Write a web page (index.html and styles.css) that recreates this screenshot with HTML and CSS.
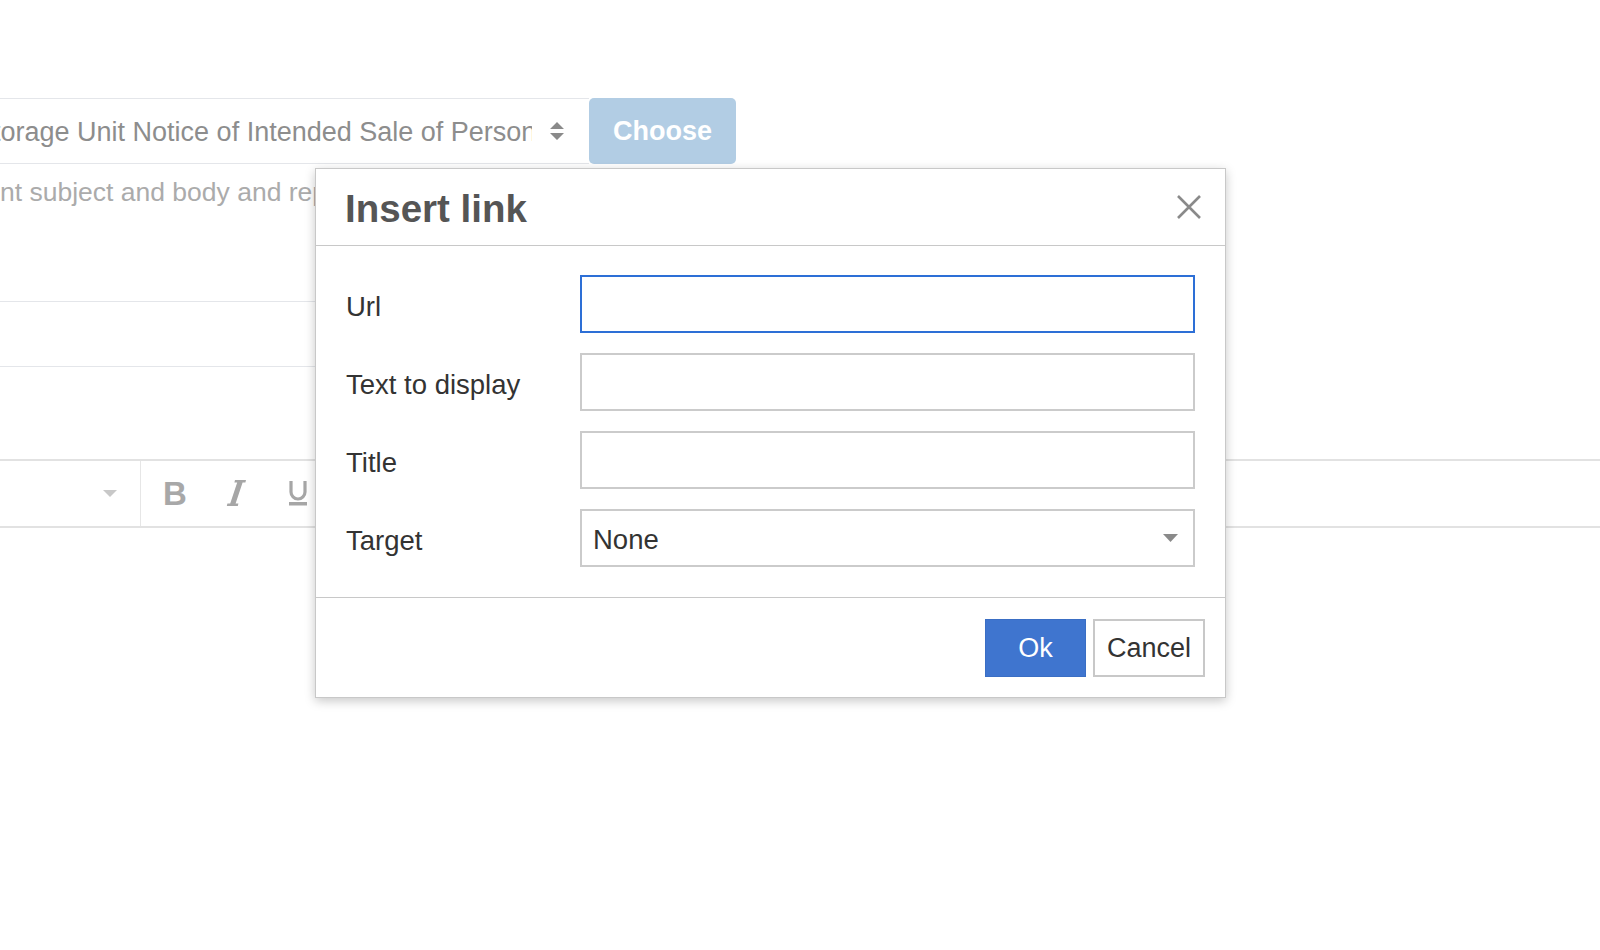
FILE: index.html
```html
<!DOCTYPE html>
<html>
<head>
<meta charset="utf-8">
<link rel="stylesheet" href="styles.css">
</head>
<body>
<div class="page">
  <div class="tpl-row">
    <div class="tpl-select">
      <span class="tpl-text">Storage Unit Notice of Intended Sale of Personal Property</span>
      <svg class="tpl-arrows" width="16" height="22" viewBox="0 0 16 22"><path d="M8 2 L15 9 H1 Z M8 20 L15 13 H1 Z" fill="#8a8a8a"/></svg>
    </div>
    <div class="choose">Choose</div>
  </div>
  <div class="hint">nt subject and body and replace the current content</div>
  <div class="field"></div>
  <div class="toolbar">
    <div class="tb-format">
      <svg width="14" height="8" viewBox="0 0 14 8"><path d="M0 0 H14 L7 7 Z" fill="#c8c8c8"/></svg>
    </div>
    <div class="tb-group">
      <span class="tb-b">B</span>
      <svg class="tb-i" width="24" height="28" viewBox="0 0 24 28"><path d="M12 1 H23 L22.4 3.5 H19.6 L12.6 24.5 H15.4 L14.8 27 H3.8 L4.4 24.5 H7.2 L14.2 3.5 H11.4 Z" fill="#a6a6a6"/></svg>
      <svg class="tb-u" width="20" height="28" viewBox="0 0 20 28"><path d="M3 2 V13 A7 7 0 0 0 17 13 V2" fill="none" stroke="#a6a6a6" stroke-width="3.2"/><rect x="1" y="23" width="18" height="3.5" fill="#a6a6a6"/></svg>
    </div>
  </div>
</div>

<div class="dialog">
  <div class="dlg-head">
    <div class="dlg-title">Insert link</div>
    <svg class="dlg-close" width="26" height="26" viewBox="0 0 26 26"><path d="M2 2 L24 24 M24 2 L2 24" stroke="#8a8a8a" stroke-width="2.6"/></svg>
  </div>
  <div class="dlg-body">
    <div class="dlg-row">
      <label class="dlg-label">Url</label>
      <div class="dlg-input focused"></div>
    </div>
    <div class="dlg-row">
      <label class="dlg-label">Text to display</label>
      <div class="dlg-input"></div>
    </div>
    <div class="dlg-row">
      <label class="dlg-label">Title</label>
      <div class="dlg-input"></div>
    </div>
    <div class="dlg-row">
      <label class="dlg-label">Target</label>
      <div class="dlg-input dlg-select">
        <span class="dlg-select-val">None</span>
        <svg width="15" height="8" viewBox="0 0 15 8"><path d="M0 0 H15 L7.5 8 Z" fill="#8a8a8a"/></svg>
      </div>
    </div>
  </div>
  <div class="dlg-foot">
    <button class="btn btn-ok">Ok</button>
    <button class="btn btn-cancel">Cancel</button>
  </div>
</div>
</body>
</html>
```

FILE: styles.css
```css
html, body {
  margin: 0;
  padding: 0;
}
body {
  width: 1600px;
  height: 950px;
  overflow: hidden;
  position: relative;
  background: #ffffff;
  font-family: "Liberation Sans", Arial, sans-serif;
}
.page {
  padding-top: 98px;
}
.tpl-row {
  display: flex;
  margin-left: -38px;
  height: 66px;
}
.tpl-select {
  box-sizing: border-box;
  width: 627px;
  height: 66px;
  border: 1px solid #e4e6ea;
  border-right: none;
  display: flex;
  align-items: center;
  padding-left: 12px;
  font-size: 27px;
  color: #8d8d8d;
}
.tpl-text {
  display: block;
  width: 557px;
  overflow: hidden;
  white-space: nowrap;
  flex: none;
  margin-top: 2px;
}
.tpl-arrows {
  margin-left: 17px;
  flex: none;
}
.choose {
  box-sizing: border-box;
  width: 147px;
  height: 66px;
  background: #b2cde4;
  border-radius: 5px;
  color: #ffffff;
  font-weight: bold;
  font-size: 27px;
  display: flex;
  align-items: center;
  justify-content: center;
}
.hint {
  margin-top: 13px;
  font-size: 26.5px;
  line-height: 30px;
  color: #ababab;
  white-space: nowrap;
  overflow: hidden;
  width: 315px;
}
.field {
  margin-top: 94px;
  box-sizing: border-box;
  height: 66px;
  width: 1150px;
  border-top: 1px solid #e4e6ea;
  border-bottom: 1px solid #e4e6ea;
}
.toolbar {
  margin-top: 92px;
  box-sizing: border-box;
  height: 69px;
  width: 1700px;
  border-top: 2px solid #e2e2e2;
  border-bottom: 2px solid #e2e2e2;
  display: flex;
  align-items: stretch;
}
.tb-format {
  box-sizing: border-box;
  width: 141px;
  border-right: 1px solid #e6e6e6;
  display: flex;
  align-items: center;
  justify-content: flex-end;
  padding-right: 23px;
}
.tb-group {
  display: flex;
  align-items: center;
  padding-left: 22px;
  padding-bottom: 3px;
}
.tb-b {
  font-weight: bold;
  font-size: 33px;
  color: #a8a8a8;
  line-height: 1;
  margin-top: 2px;
}
.tb-i {
  margin-left: 36px;
  margin-top: 1px;
}
.tb-u {
  margin-left: 41px;
  margin-top: 1px;
}

.dialog {
  position: absolute;
  left: 315px;
  top: 168px;
  width: 911px;
  box-sizing: border-box;
  background: #ffffff;
  border: 1px solid #c8c8c8;
  box-shadow: 0 3px 10px rgba(0, 0, 0, 0.22);
}
.dlg-head {
  height: 76px;
  border-bottom: 1px solid #c8c8c8;
  display: flex;
  align-items: center;
  justify-content: space-between;
  padding: 0 23px 0 29px;
}
.dlg-title {
  font-size: 38.5px;
  font-weight: bold;
  color: #555555;
  margin-top: 3px;
}
.dlg-body {
  padding: 29px 30px 10px 30px;
  border-bottom: 1px solid #c8c8c8;
}
.dlg-row {
  display: flex;
  align-items: center;
  margin-bottom: 20px;
}
.dlg-label {
  width: 234px;
  flex: none;
  font-size: 27.5px;
  color: #333333;
  margin-top: 5px;
}
.dlg-input {
  box-sizing: border-box;
  width: 615px;
  height: 58px;
  border: 2px solid #cbcbcb;
  background: #ffffff;
}
.dlg-input.focused {
  border-color: #2d6fd6;
}
.dlg-select {
  display: flex;
  align-items: center;
  justify-content: space-between;
  padding: 0 15px 0 11px;
  font-size: 27.5px;
  color: #333333;
}
.dlg-select-val {
  margin-top: 3px;
}
.dlg-foot {
  height: 99px;
  display: flex;
  justify-content: flex-end;
  align-items: flex-start;
  padding: 21px 20px 0 0;
  box-sizing: border-box;
  gap: 7px;
}
.btn {
  box-sizing: border-box;
  height: 58px;
  font-family: "Liberation Sans", Arial, sans-serif;
  font-size: 27px;
  padding: 0;
  margin: 0;
  cursor: pointer;
}
.btn-ok {
  width: 101px;
  background: #3f75cf;
  color: #ffffff;
  border: 1px solid #3a6ec4;
}
.btn-cancel {
  width: 112px;
  background: #ffffff;
  color: #333333;
  border: 2px solid #c8c8c8;
}
```
